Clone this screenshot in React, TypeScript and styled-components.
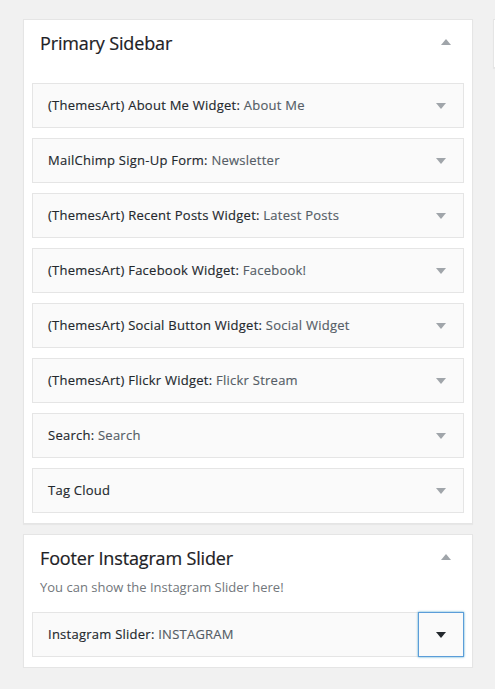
import React from "react";
import styled, { createGlobalStyle } from "styled-components";

const Global = createGlobalStyle`
  html, body {
    margin: 0;
    padding: 0;
    background: #f1f1f1;
    overflow: hidden;
  }
  body {
    font-family: "Open Sans", "Noto Sans", "Liberation Sans", sans-serif;
    color: #23282d;
  }
`;

const Page = styled.div`
  display: flex;
  align-items: flex-start;
  gap: 20px;
  padding: 19px 0 0 23px;
`;

const Column = styled.div`
  display: flex;
  flex-direction: column;
  gap: 10px;
  width: 450px;
  flex-shrink: 0;
`;

const Panel = styled.section`
  background: #fff;
  border: 1px solid #e5e5e5;
  box-shadow: 0 1px 1px rgba(0, 0, 0, 0.04);
  padding: 0 8px 10px;
`;

const Header = styled.div<{ $bottom: number }>`
  display: flex;
  flex-direction: column;
  gap: 7px;
  padding: 11px 8px ${(p) => p.$bottom}px;
`;

const TitleRow = styled.div`
  display: flex;
  align-items: center;
  justify-content: space-between;
`;

const Title = styled.h2`
  margin: 0;
  font-size: 18px;
  line-height: 24px;
  font-weight: 400;
  letter-spacing: -0.15px;
  color: #1d2125;
  -webkit-text-stroke: 0.2px #1d2125;
`;

const Toggle = styled.span`
  display: flex;
  width: 20px;
  justify-content: center;
  margin-top: -3px;
  color: #a0a5aa;
`;

const Description = styled.p`
  margin: 0;
  font-size: 13px;
  line-height: 20px;
  color: #72777c;
`;

const WidgetList = styled.div`
  display: flex;
  flex-direction: column;
  gap: 10px;
`;

const Widget = styled.div`
  display: flex;
  align-items: stretch;
  background: #fafafa;
  border: 1px solid #e5e5e5;
`;

const WidgetTitle = styled.h3`
  flex: 1;
  margin: 0;
  padding: 15px;
  font-size: 13px;
  line-height: 13px;
  font-weight: 400;
  letter-spacing: 0.25px;
  color: #23282d;
  white-space: nowrap;
  -webkit-text-stroke: 0.15px currentColor;
`;

const InTitle = styled.span`
  color: #555d66;
`;

const Action = styled.button<{ $focused?: boolean }>`
  display: flex;
  align-items: center;
  justify-content: center;
  width: 46px;
  padding: 0;
  margin: -1px -1px -1px 0;
  background: none;
  cursor: pointer;
  border: 1px solid ${(p) => (p.$focused ? "#5b9dd9" : "transparent")};
  box-shadow: ${(p) => (p.$focused ? "0 0 2px rgba(30, 140, 190, 0.8)" : "none")};
  color: ${(p) => (p.$focused ? "#23282d" : "#a0a5aa")};
`;

const Arrow = ({ up }: { up?: boolean }) => (
  <svg width="10" height="6" viewBox="0 0 10 6" fill="currentColor">
    {up ? <polygon points="0,6 10,6 5,0" /> : <polygon points="0,0 10,0 5,6" />}
  </svg>
);

type W = { name: string; title?: string; focused?: boolean };

const primary: W[] = [
  { name: "(ThemesArt) About Me Widget", title: "About Me" },
  { name: "MailChimp Sign-Up Form", title: "Newsletter" },
  { name: "(ThemesArt) Recent Posts Widget", title: "Latest Posts" },
  { name: "(ThemesArt) Facebook Widget", title: "Facebook!" },
  { name: "(ThemesArt) Social Button Widget", title: "Social Widget" },
  { name: "(ThemesArt) Flickr Widget", title: "Flickr Stream" },
  { name: "Search", title: "Search" },
  { name: "Tag Cloud" },
];

const footer: W[] = [{ name: "Instagram Slider", title: "INSTAGRAM", focused: true }];

const WidgetRow = ({ w }: { w: W }) => (
  <Widget>
    <WidgetTitle>
      {w.name}
      {w.title ? (
        <>
          : <InTitle>{w.title}</InTitle>
        </>
      ) : null}
    </WidgetTitle>
    <Action $focused={w.focused} aria-label="Toggle">
      <Arrow />
    </Action>
  </Widget>
);

const Sidebar = ({
  title,
  description,
  widgets,
}: {
  title: string;
  description?: string;
  widgets: W[];
}) => (
  <Panel>
    <Header $bottom={description ? 15 : 28}>
      <TitleRow>
        <Title>{title}</Title>
        <Toggle>
          <Arrow up />
        </Toggle>
      </TitleRow>
      {description && <Description>{description}</Description>}
    </Header>
    <WidgetList>
      {widgets.map((w, i) => (
        <WidgetRow key={i} w={w} />
      ))}
    </WidgetList>
  </Panel>
);

const CollapsedPanel = styled.section`
  background: #fff;
  border: 1px solid #e5e5e5;
  box-shadow: 0 1px 1px rgba(0, 0, 0, 0.04);
  height: 47px;
`;

export default function App() {
  return (
    <>
      <Global />
      <Page>
        <Column>
          <Sidebar title="Primary Sidebar" widgets={primary} />
          <Sidebar
            title="Footer Instagram Slider"
            description="You can show the Instagram Slider here!"
            widgets={footer}
          />
        </Column>
        <Column>
          <CollapsedPanel />
        </Column>
      </Page>
    </>
  );
}
